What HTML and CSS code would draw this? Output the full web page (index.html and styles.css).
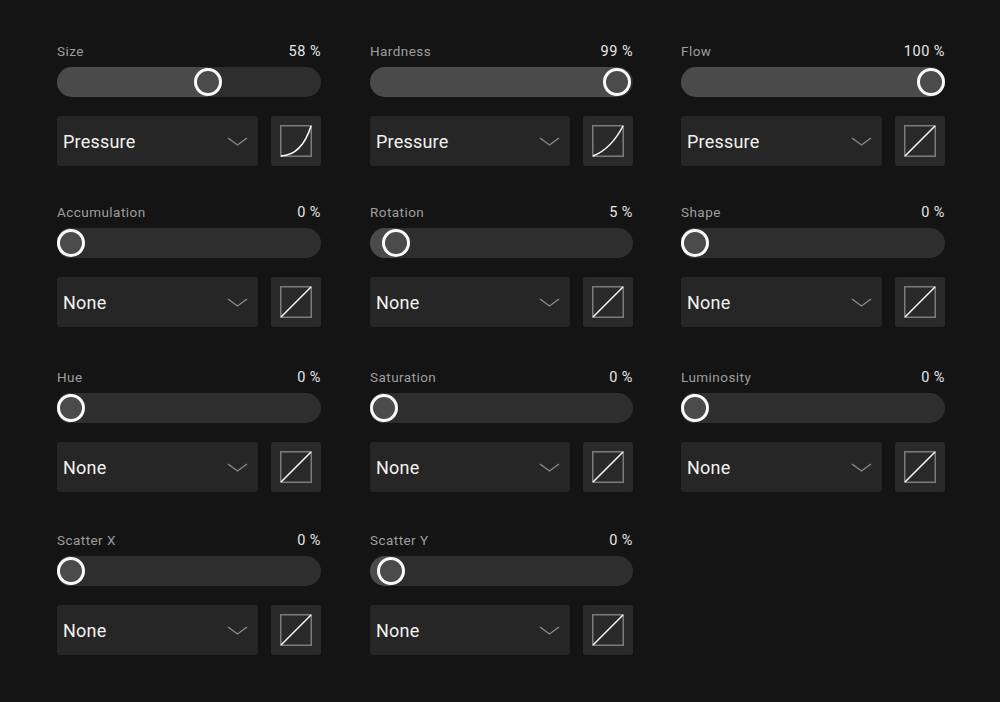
FILE: index.html
```html
<!DOCTYPE html>
<html>
<head>
<meta charset="utf-8">
<link rel="stylesheet" href="styles.css">
</head>
<body>
<main class="panel">
  <section class="ctl">
    <div class="head"><span class="label">Size</span><span class="value">58 %</span></div>
    <div class="track" style="--p:0.58"><div class="fill"></div><div class="knob"></div></div>
    <div class="row">
      <div class="select"><span>Pressure</span><svg class="chev" width="21" height="9" viewBox="0 0 21 9"><path d="M1 1 L10.5 8 L20 1" fill="none" stroke="#8a8a8a" stroke-width="1.4"/></svg></div>
      <div class="curve"><svg width="32" height="32" viewBox="0 0 32 32"><rect x="0.75" y="0.75" width="30.5" height="30.5" fill="none" stroke="#7c7c7c" stroke-width="1.5"/><path d="M1 31 Q22 30 31 1" fill="none" stroke="#fff" stroke-width="1.5"/></svg></div>
    </div>
  </section>
  <section class="ctl">
    <div class="head"><span class="label">Hardness</span><span class="value">99 %</span></div>
    <div class="track" style="--p:0.99"><div class="fill"></div><div class="knob"></div></div>
    <div class="row">
      <div class="select"><span>Pressure</span><svg class="chev" width="21" height="9" viewBox="0 0 21 9"><path d="M1 1 L10.5 8 L20 1" fill="none" stroke="#8a8a8a" stroke-width="1.4"/></svg></div>
      <div class="curve"><svg width="32" height="32" viewBox="0 0 32 32"><rect x="0.75" y="0.75" width="30.5" height="30.5" fill="none" stroke="#7c7c7c" stroke-width="1.5"/><path d="M1 31 Q19 24 31 1" fill="none" stroke="#fff" stroke-width="1.5"/></svg></div>
    </div>
  </section>
  <section class="ctl">
    <div class="head"><span class="label">Flow</span><span class="value">100 %</span></div>
    <div class="track" style="--p:1"><div class="fill"></div><div class="knob"></div></div>
    <div class="row">
      <div class="select"><span>Pressure</span><svg class="chev" width="21" height="9" viewBox="0 0 21 9"><path d="M1 1 L10.5 8 L20 1" fill="none" stroke="#8a8a8a" stroke-width="1.4"/></svg></div>
      <div class="curve"><svg width="32" height="32" viewBox="0 0 32 32"><rect x="0.75" y="0.75" width="30.5" height="30.5" fill="none" stroke="#7c7c7c" stroke-width="1.5"/><path d="M1 31 L31 1" fill="none" stroke="#fff" stroke-width="1.5"/></svg></div>
    </div>
  </section>

  <section class="ctl">
    <div class="head"><span class="label">Accumulation</span><span class="value">0 %</span></div>
    <div class="track" style="--p:0"><div class="fill"></div><div class="knob"></div></div>
    <div class="row">
      <div class="select"><span>None</span><svg class="chev" width="21" height="9" viewBox="0 0 21 9"><path d="M1 1 L10.5 8 L20 1" fill="none" stroke="#8a8a8a" stroke-width="1.4"/></svg></div>
      <div class="curve"><svg width="32" height="32" viewBox="0 0 32 32"><rect x="0.75" y="0.75" width="30.5" height="30.5" fill="none" stroke="#7c7c7c" stroke-width="1.5"/><path d="M1 31 L31 1" fill="none" stroke="#fff" stroke-width="1.5"/></svg></div>
    </div>
  </section>
  <section class="ctl">
    <div class="head"><span class="label">Rotation</span><span class="value">5 %</span></div>
    <div class="track" style="--p:0.05"><div class="fill"></div><div class="knob"></div></div>
    <div class="row">
      <div class="select"><span>None</span><svg class="chev" width="21" height="9" viewBox="0 0 21 9"><path d="M1 1 L10.5 8 L20 1" fill="none" stroke="#8a8a8a" stroke-width="1.4"/></svg></div>
      <div class="curve"><svg width="32" height="32" viewBox="0 0 32 32"><rect x="0.75" y="0.75" width="30.5" height="30.5" fill="none" stroke="#7c7c7c" stroke-width="1.5"/><path d="M1 31 L31 1" fill="none" stroke="#fff" stroke-width="1.5"/></svg></div>
    </div>
  </section>
  <section class="ctl">
    <div class="head"><span class="label">Shape</span><span class="value">0 %</span></div>
    <div class="track" style="--p:0"><div class="fill"></div><div class="knob"></div></div>
    <div class="row">
      <div class="select"><span>None</span><svg class="chev" width="21" height="9" viewBox="0 0 21 9"><path d="M1 1 L10.5 8 L20 1" fill="none" stroke="#8a8a8a" stroke-width="1.4"/></svg></div>
      <div class="curve"><svg width="32" height="32" viewBox="0 0 32 32"><rect x="0.75" y="0.75" width="30.5" height="30.5" fill="none" stroke="#7c7c7c" stroke-width="1.5"/><path d="M1 31 L31 1" fill="none" stroke="#fff" stroke-width="1.5"/></svg></div>
    </div>
  </section>

  <section class="ctl">
    <div class="head"><span class="label">Hue</span><span class="value">0 %</span></div>
    <div class="track" style="--p:0"><div class="fill"></div><div class="knob"></div></div>
    <div class="row">
      <div class="select"><span>None</span><svg class="chev" width="21" height="9" viewBox="0 0 21 9"><path d="M1 1 L10.5 8 L20 1" fill="none" stroke="#8a8a8a" stroke-width="1.4"/></svg></div>
      <div class="curve"><svg width="32" height="32" viewBox="0 0 32 32"><rect x="0.75" y="0.75" width="30.5" height="30.5" fill="none" stroke="#7c7c7c" stroke-width="1.5"/><path d="M1 31 L31 1" fill="none" stroke="#fff" stroke-width="1.5"/></svg></div>
    </div>
  </section>
  <section class="ctl">
    <div class="head"><span class="label">Saturation</span><span class="value">0 %</span></div>
    <div class="track" style="--p:0"><div class="fill"></div><div class="knob"></div></div>
    <div class="row">
      <div class="select"><span>None</span><svg class="chev" width="21" height="9" viewBox="0 0 21 9"><path d="M1 1 L10.5 8 L20 1" fill="none" stroke="#8a8a8a" stroke-width="1.4"/></svg></div>
      <div class="curve"><svg width="32" height="32" viewBox="0 0 32 32"><rect x="0.75" y="0.75" width="30.5" height="30.5" fill="none" stroke="#7c7c7c" stroke-width="1.5"/><path d="M1 31 L31 1" fill="none" stroke="#fff" stroke-width="1.5"/></svg></div>
    </div>
  </section>
  <section class="ctl">
    <div class="head"><span class="label">Luminosity</span><span class="value">0 %</span></div>
    <div class="track" style="--p:0"><div class="fill"></div><div class="knob"></div></div>
    <div class="row">
      <div class="select"><span>None</span><svg class="chev" width="21" height="9" viewBox="0 0 21 9"><path d="M1 1 L10.5 8 L20 1" fill="none" stroke="#8a8a8a" stroke-width="1.4"/></svg></div>
      <div class="curve"><svg width="32" height="32" viewBox="0 0 32 32"><rect x="0.75" y="0.75" width="30.5" height="30.5" fill="none" stroke="#7c7c7c" stroke-width="1.5"/><path d="M1 31 L31 1" fill="none" stroke="#fff" stroke-width="1.5"/></svg></div>
    </div>
  </section>

  <section class="ctl">
    <div class="head"><span class="label">Scatter X</span><span class="value">0 %</span></div>
    <div class="track" style="--p:0"><div class="fill"></div><div class="knob"></div></div>
    <div class="row">
      <div class="select"><span>None</span><svg class="chev" width="21" height="9" viewBox="0 0 21 9"><path d="M1 1 L10.5 8 L20 1" fill="none" stroke="#8a8a8a" stroke-width="1.4"/></svg></div>
      <div class="curve"><svg width="32" height="32" viewBox="0 0 32 32"><rect x="0.75" y="0.75" width="30.5" height="30.5" fill="none" stroke="#7c7c7c" stroke-width="1.5"/><path d="M1 31 L31 1" fill="none" stroke="#fff" stroke-width="1.5"/></svg></div>
    </div>
  </section>
  <section class="ctl">
    <div class="head"><span class="label">Scatter Y</span><span class="value">0 %</span></div>
    <div class="track" style="--p:0.03"><div class="fill"></div><div class="knob"></div></div>
    <div class="row">
      <div class="select"><span>None</span><svg class="chev" width="21" height="9" viewBox="0 0 21 9"><path d="M1 1 L10.5 8 L20 1" fill="none" stroke="#8a8a8a" stroke-width="1.4"/></svg></div>
      <div class="curve"><svg width="32" height="32" viewBox="0 0 32 32"><rect x="0.75" y="0.75" width="30.5" height="30.5" fill="none" stroke="#7c7c7c" stroke-width="1.5"/><path d="M1 31 L31 1" fill="none" stroke="#fff" stroke-width="1.5"/></svg></div>
    </div>
  </section>
</main>
</body>
</html>
```
FILE: styles.css
```css
* { box-sizing: border-box; }
html, body {
  margin: 0;
  padding: 0;
  background: #141414;
  font-family: Roboto, "Liberation Sans", sans-serif;
  width: 1000px;
  height: 702px;
  overflow: hidden;
}
.panel {
  display: grid;
  grid-template-columns: 264px 264px 264px;
  column-gap: 48px;
  row-gap: 38px;
  padding: 41px 0 0 57px;
}
.ctl {
  display: flex;
  flex-direction: column;
}
.ctl:nth-child(-n+3) { margin-bottom: -2px; }
.ctl:nth-child(n+4):nth-child(-n+6) { margin-bottom: 2px; }
.ctl:nth-child(3n+2) { margin-left: 1px; }
.head {
  display: flex;
  justify-content: space-between;
  align-items: baseline;
  height: 20px;
  line-height: 20px;
  margin-bottom: 6px;
}
.label {
  font-size: 13.5px;
  letter-spacing: 0.45px;
  color: #9e9e9e;
}
.value {
  font-size: 14.5px;
  letter-spacing: 0.5px;
  color: #e6e6e6;
}
.track {
  position: relative;
  height: 30px;
  border-radius: 15px;
  background: #2e2e2e;
  margin-bottom: 19px;
}
.fill {
  position: absolute;
  left: 0;
  top: 0;
  bottom: 0;
  width: calc(14px + var(--p) * (100% - 28px));
  border-radius: 15px 0 0 15px;
  background: #4a4a4a;
}
.knob {
  position: absolute;
  top: 1px;
  left: calc(var(--p) * (100% - 28px));
  width: 28px;
  height: 28px;
  border-radius: 50%;
  border: 3px solid #fafafa;
  background: #4b4b4b;
}
.row {
  display: flex;
  gap: 13px;
  height: 50px;
}
.select {
  flex: 1;
  display: flex;
  align-items: center;
  justify-content: space-between;
  background: #262626;
  border-radius: 3px;
  padding: 0 10px 0 6px;
  font-size: 18px;
  letter-spacing: 0.2px;
  color: #f2f2f2;
}
.chev { display: block; }
.curve {
  width: 50px;
  height: 50px;
  flex: none;
  display: flex;
  align-items: center;
  justify-content: center;
  background: #2a2a2a;
  border-radius: 3px;
}
.curve svg { display: block; }
```
